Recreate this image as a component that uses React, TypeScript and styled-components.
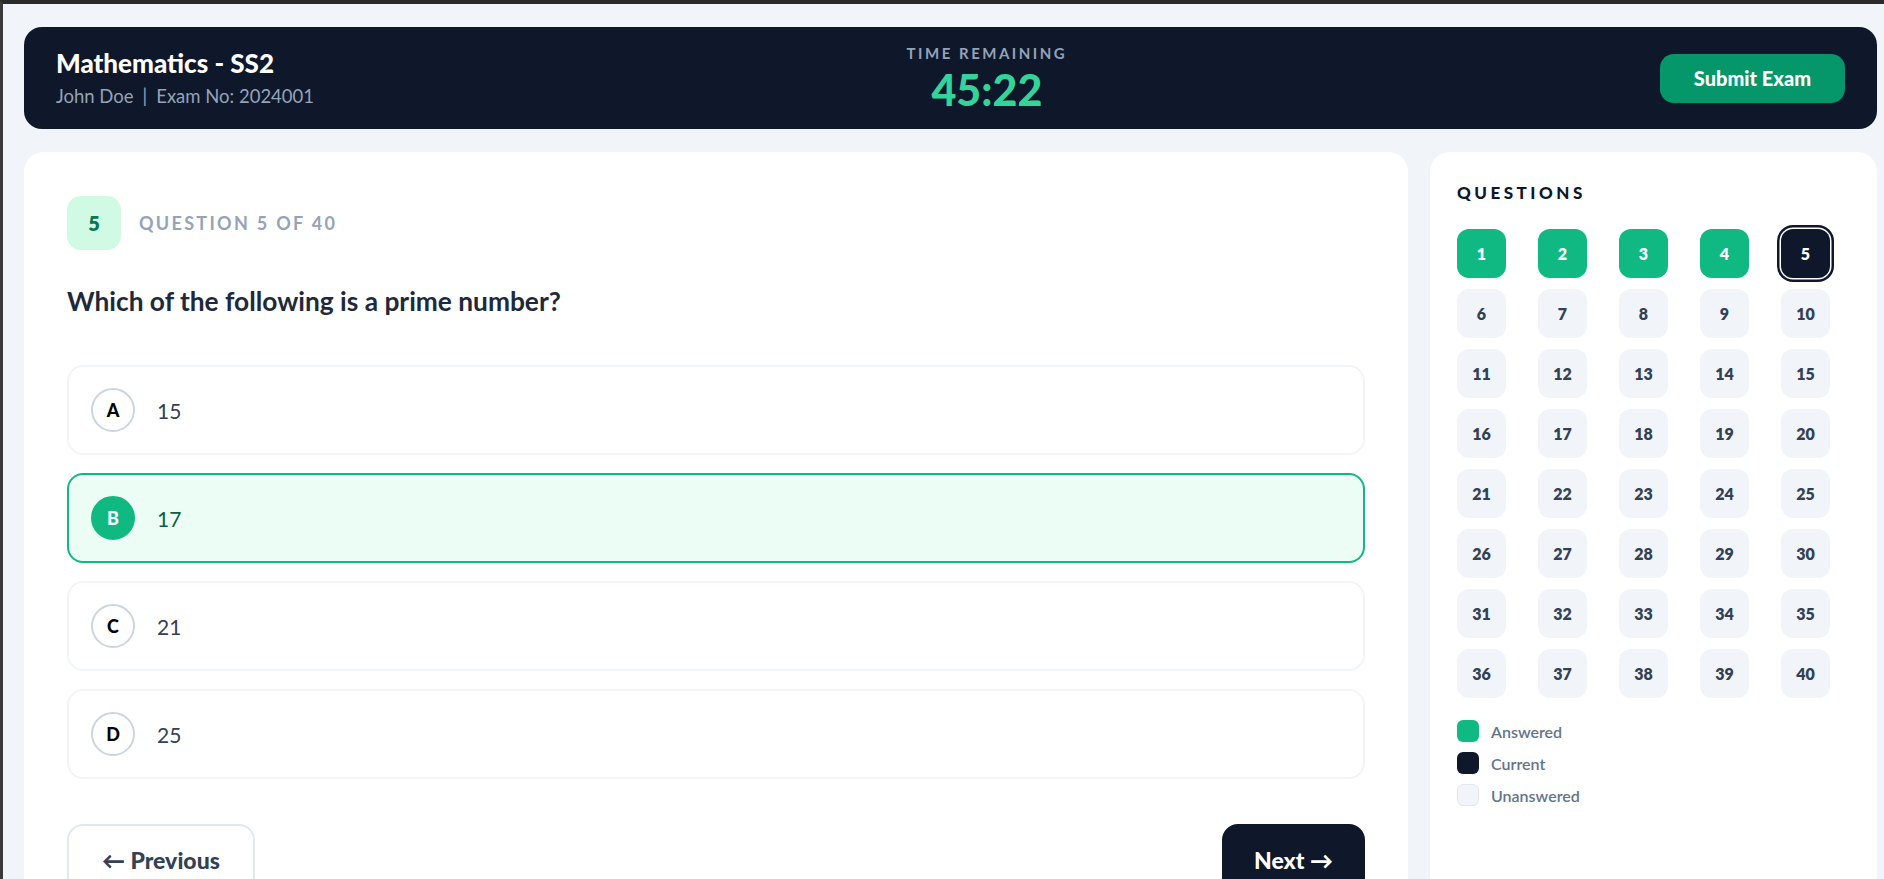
import React from 'react'
import styled, { createGlobalStyle, css } from 'styled-components'

const GlobalStyle = createGlobalStyle`
  html, body {
    margin: 0;
    padding: 0;
  }
  body {
    background: #f1f5f9;
    font-family: Lato, "Noto Sans", sans-serif;
    border-top: 4px solid #2b2b2b;
    border-left: 3px solid #3a3a3a;
    overflow: hidden;
  }
  * {
    box-sizing: border-box;
  }
`

const Page = styled.div`
  display: flex;
  flex-direction: column;
  gap: 23px;
  padding: 23px 7px 0 21px;
`

const Header = styled.header`
  height: 102px;
  display: flex;
  align-items: center;
  justify-content: space-between;
  padding: 0 32px;
  background: #0f172a;
  border-radius: 18px;
`

const ExamInfo = styled.div`
  display: flex;
  flex-direction: column;
`

const ExamTitle = styled.div`
  color: #ffffff;
  font-size: 26px;
  font-weight: 900;
  line-height: 30px;
`

const ExamMeta = styled.div`
  margin-top: 6px;
  color: #94a3b8;
  font-size: 18.5px;
  line-height: 24px;
`

const Sep = styled.span`
  margin: 0 9px;
`

const Timer = styled.div`
  display: flex;
  flex-direction: column;
  align-items: center;
`

const TimerLabel = styled.div`
  color: #94a3b8;
  font-size: 15px;
  font-weight: 700;
  letter-spacing: 2.5px;
  line-height: 20px;
`

const TimerValue = styled.div`
  margin-top: 4px;
  color: #34d399;
  font-size: 43px;
  font-weight: 900;
  line-height: 46px;
`

const SubmitButton = styled.button`
  height: 49px;
  padding: 0 34px;
  border: none;
  border-radius: 14px;
  background: #059669;
  color: #ffffff;
  font-family: inherit;
  font-size: 20px;
  font-weight: 900;
  cursor: pointer;
`

const Body = styled.div`
  display: flex;
  gap: 22px;
  align-items: stretch;
`

const QuestionPanel = styled.main`
  flex: 1;
  background: #ffffff;
  border-radius: 20px;
  padding: 44px 43px;
`

const QuestionHead = styled.div`
  display: flex;
  align-items: center;
  gap: 18px;
`

const NumberBadge = styled.div`
  width: 54px;
  height: 54px;
  display: flex;
  align-items: center;
  justify-content: center;
  border-radius: 14px;
  background: #d1fae5;
  color: #047857;
  font-size: 20px;
  font-weight: 800;
`

const QuestionCount = styled.div`
  color: #94a3b8;
  font-size: 18px;
  font-weight: 700;
  letter-spacing: 2.3px;
`

const QuestionText = styled.h2`
  margin: 33px 0 0;
  color: #1e293b;
  font-size: 26.3px;
  font-weight: 700;
  line-height: 36px;
`

const Options = styled.div`
  margin-top: 46px;
  display: flex;
  flex-direction: column;
  gap: 18px;
`

const Option = styled.div<{ $selected?: boolean }>`
  height: 90px;
  display: flex;
  align-items: center;
  gap: 22px;
  padding: 0 22px;
  border: 2px solid #f1f5f9;
  border-radius: 16px;
  background: #ffffff;
  color: #334155;
  font-size: 21px;
  cursor: pointer;
  ${(p) =>
    p.$selected &&
    css`
      border-color: #10b981;
      background: #ecfdf5;
      color: #065f46;
    `}
`

const OptionLetter = styled.span<{ $selected?: boolean }>`
  width: 44px;
  height: 44px;
  display: flex;
  align-items: center;
  justify-content: center;
  border-radius: 50%;
  border: 2px solid ${(p) => (p.$selected ? '#10b981' : '#cbd5e1')};
  background: ${(p) => (p.$selected ? '#10b981' : 'transparent')};
  color: ${(p) => (p.$selected ? '#ffffff' : '#000000')};
  font-size: 18px;
  font-weight: 900;
`

const Nav = styled.div`
  margin-top: 45px;
  display: flex;
  justify-content: space-between;
`

const NavButton = styled.button<{ $primary?: boolean }>`
  height: 72px;
  padding: 0 ${(p) => (p.$primary ? '30px' : '33px')};
  border: 2px solid ${(p) => (p.$primary ? '#0f172a' : '#e2e8f0')};
  border-radius: 16px;
  background: ${(p) => (p.$primary ? '#0f172a' : '#ffffff')};
  color: ${(p) => (p.$primary ? '#ffffff' : '#334155')};
  font-family: inherit;
  font-size: 23px;
  font-weight: 900;
  cursor: pointer;
`

const Sidebar = styled.aside`
  width: 447px;
  min-height: 800px;
  background: #ffffff;
  border-radius: 20px;
  padding: 28px 27px;
`

const SidebarTitle = styled.div`
  color: #0f172a;
  font-size: 17px;
  font-weight: 900;
  letter-spacing: 3.5px;
  line-height: 25px;
`

const Grid = styled.div`
  margin-top: 24px;
  display: grid;
  grid-template-columns: repeat(5, 49px);
  column-gap: 32px;
  row-gap: 11px;
`

type CellState = 'answered' | 'current' | 'open'

const cellColors: Record<CellState, { bg: string; fg: string }> = {
  answered: { bg: '#10b981', fg: '#ffffff' },
  current: { bg: '#0f172a', fg: '#ffffff' },
  open: { bg: '#f1f5f9', fg: '#334155' },
}

const Cell = styled.button<{ $state: CellState }>`
  width: 49px;
  height: 49px;
  display: flex;
  align-items: center;
  justify-content: center;
  border: none;
  border-radius: 12px;
  background: ${(p) => cellColors[p.$state].bg};
  color: ${(p) => cellColors[p.$state].fg};
  font-family: inherit;
  font-size: 16px;
  font-weight: 800;
  cursor: pointer;
  ${(p) =>
    p.$state === 'current' &&
    css`
      box-shadow: 0 0 0 1.5px #ffffff, 0 0 0 4px #0f172a;
    `}
`

const Legend = styled.div`
  margin-top: 22px;
  display: flex;
  flex-direction: column;
  gap: 10px;
`

const LegendItem = styled.div`
  display: flex;
  align-items: center;
  gap: 12px;
  color: #64748b;
  font-size: 16px;
  font-weight: 600;
`

const Swatch = styled.span<{ $state: CellState }>`
  width: 22px;
  height: 22px;
  border-radius: 6px;
  background: ${(p) => cellColors[p.$state].bg};
  border: ${(p) => (p.$state === 'open' ? '1px solid #e2e8f0' : 'none')};
`

const options = [
  { key: 'A', text: '15' },
  { key: 'B', text: '17' },
  { key: 'C', text: '21' },
  { key: 'D', text: '25' },
]

const current = 5
const answered = [1, 2, 3, 4]

export default function App() {
  const selected = 'B'

  return (
    <>
      <GlobalStyle />
      <Page>
        <Header>
          <ExamInfo>
            <ExamTitle>Mathematics - SS2</ExamTitle>
            <ExamMeta>
              John Doe<Sep>|</Sep>Exam No: 2024001
            </ExamMeta>
          </ExamInfo>
          <Timer>
            <TimerLabel>TIME REMAINING</TimerLabel>
            <TimerValue>45:22</TimerValue>
          </Timer>
          <SubmitButton>Submit Exam</SubmitButton>
        </Header>

        <Body>
          <QuestionPanel>
            <QuestionHead>
              <NumberBadge>{current}</NumberBadge>
              <QuestionCount>QUESTION {current} OF 40</QuestionCount>
            </QuestionHead>
            <QuestionText>Which of the following is a prime number?</QuestionText>
            <Options>
              {options.map((o) => (
                <Option key={o.key} $selected={o.key === selected}>
                  <OptionLetter $selected={o.key === selected}>{o.key}</OptionLetter>
                  {o.text}
                </Option>
              ))}
            </Options>
            <Nav>
              <NavButton>← Previous</NavButton>
              <NavButton $primary>Next →</NavButton>
            </Nav>
          </QuestionPanel>

          <Sidebar>
            <SidebarTitle>QUESTIONS</SidebarTitle>
            <Grid>
              {Array.from({ length: 40 }, (_, i) => i + 1).map((n) => {
                const state: CellState = n === current ? 'current' : answered.includes(n) ? 'answered' : 'open'
                return (
                  <Cell key={n} $state={state}>
                    {n}
                  </Cell>
                )
              })}
            </Grid>
            <Legend>
              <LegendItem>
                <Swatch $state="answered" />
                Answered
              </LegendItem>
              <LegendItem>
                <Swatch $state="current" />
                Current
              </LegendItem>
              <LegendItem>
                <Swatch $state="open" />
                Unanswered
              </LegendItem>
            </Legend>
          </Sidebar>
        </Body>
      </Page>
    </>
  )
}
